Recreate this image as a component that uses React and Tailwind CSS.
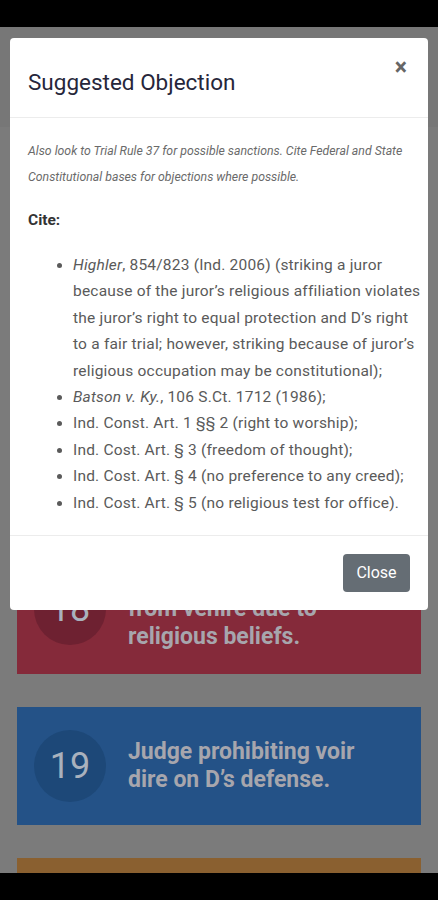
import React from 'react';

const cards = [
  { n: 16, lines: ['Striking juror for', 'cause without', 'adequate basis.'], bg: 'bg-[#7a3a6e]', dot: 'bg-[#642f5a]' },
  { n: 17, lines: ['Denial of additional', 'peremptory strikes.'], bg: 'bg-[#2f6a4a]', dot: 'bg-[#27583d]' },
  { n: 18, lines: ['Striking juror', 'from venire due to', 'religious beliefs.'], bg: 'bg-[#852a3a]', dot: 'bg-[#6e2131]' },
  { n: 19, lines: ['Judge prohibiting voir', 'dire on D\u2019s defense.'], bg: 'bg-[#245287]', dot: 'bg-[#1d4878]' },
  { n: 20, lines: ['Limiting time for', 'voir dire.'], bg: 'bg-[#8a6030]', dot: 'bg-[#74502a]' },
];

function Card({ card }) {
  return (
    <div className={`flex items-center min-h-[117px] py-[23px] pl-[17px] pr-4 ${card.bg}`}>
      <div className={`flex h-[72px] w-[72px] shrink-0 items-center justify-center rounded-full text-[36px] text-[#a9b1bd] ${card.dot}`}>
        {card.n}
      </div>
      <div className="ml-[22px] text-[23px] font-bold leading-[28px] text-[#a7a6ad]">
        {card.lines.map((l) => (
          <div key={l}>{l}</div>
        ))}
      </div>
    </div>
  );
}

export default function App() {
  return (
    <div className="relative h-[900px] w-[438px] overflow-hidden bg-[#7b7b7b] font-['Roboto',sans-serif]">
      {/* page under the dim */}
      <div className="h-[27px] bg-black" />
      <div className="h-[100px] bg-[#777777]" />
      <div className="flex flex-col gap-[33px] px-[17px] pt-[103px]">
        {cards.map((c) => (
          <Card key={c.n} card={c} />
        ))}
      </div>
      <div className="absolute bottom-0 left-0 h-[27px] w-full bg-black" />

      {/* modal */}
      <div className="absolute left-[10px] top-[38px] w-[418px] rounded-[4px] bg-white">
        <div className="flex h-[80px] items-start justify-between border-b border-[#ececec] px-[18px]">
          <h2 className="mt-[31px] text-[22.5px] leading-[26px] text-[#26263a]">Suggested Objection</h2>
          <button className="mt-[18px] mr-[3px] text-[23px] font-bold leading-[24px] text-[#666]">×</button>
        </div>
        <div className="pl-[18px] pr-[12px] pt-[20px] pb-[19px]">
          <p className="pr-[6px] text-[12.3px] italic leading-[26px] text-[#6a6a6a]">
            Also look to Trial Rule 37 for possible sanctions. Cite Federal and State Constitutional bases for objections where possible.
          </p>
          <p className="mt-[18px] text-[15.5px] font-bold leading-[24px] text-[#333]">Cite:</p>
          <ul className="mt-[20px] list-disc pl-[45px] text-[15.5px] leading-[26.4px] tracking-[0.2px] text-[#5a5a5a]">
            <li className="whitespace-nowrap">
              <i>Highler</i>, 854/823 (Ind. 2006) (striking a juror
              <br />
              because of the juror’s religious affiliation violates
              <br />
              the juror’s right to equal protection and D’s right
              <br />
              to a fair trial; however, striking because of juror’s
              <br />
              religious occupation may be constitutional);
            </li>
            <li>
              <i>Batson v. Ky.</i>, 106 S.Ct. 1712 (1986);
            </li>
            <li>Ind. Const. Art. 1 §§ 2 (right to worship);</li>
            <li>Ind. Cost. Art. § 3 (freedom of thought);</li>
            <li>Ind. Cost. Art. § 4 (no preference to any creed);</li>
            <li>Ind. Cost. Art. § 5 (no religious test for office).</li>
          </ul>
        </div>
        <div className="flex justify-end border-t border-[#ececec] px-[18px] py-[18px]">
          <button className="h-[38px] w-[67px] rounded-[4px] bg-[#656d74] text-[16px] text-white">Close</button>
        </div>
      </div>
    </div>
  );
}
